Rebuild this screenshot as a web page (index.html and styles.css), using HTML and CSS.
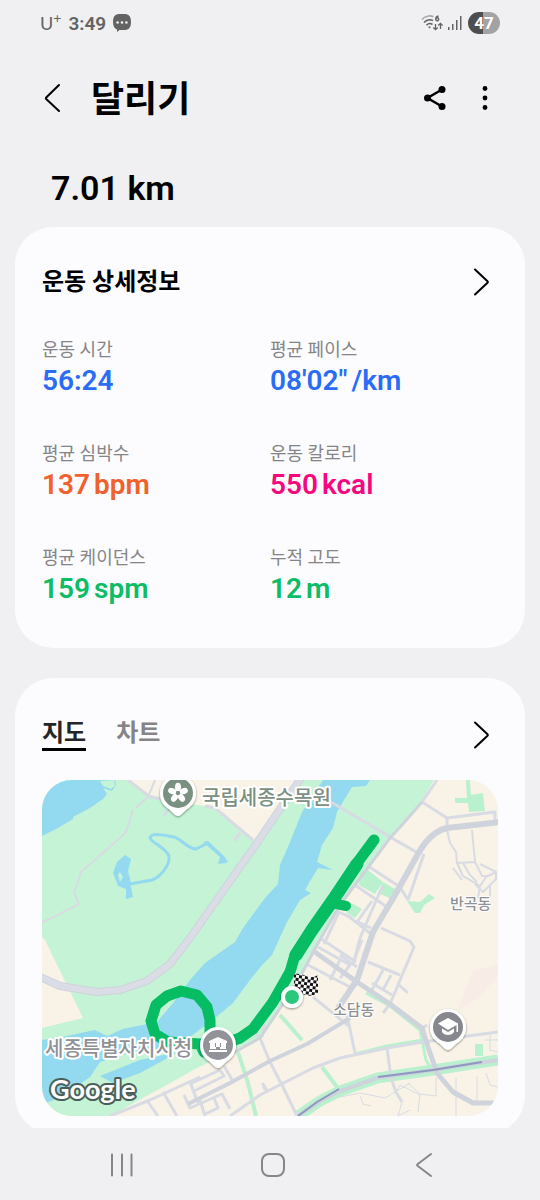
FILE: index.html
```html
<!DOCTYPE html>
<html lang="ko">
<head>
  <meta charset="UTF-8" />
  <meta name="viewport" content="width=device-width, initial-scale=1">
  <title>달리기</title>
  <link rel="stylesheet" href="styles.css">
</head>
<body>
  <!-- Status bar -->
  <div class="status-bar">
    <div class="status-left">
      <span class="carrier">U<sup>+</sup></span>
      <span class="clock">3:49</span>
      <svg class="chat-icon" width="18" height="18" viewBox="0 0 18 18">
        <path d="M7 0h4c5 0 7 2.500 7 8s-2 8-7 8H6.500L4 18v-2.500C1.500 14.500 0 12 0 8c0-5.500 2-8 7-8z" fill="#636363"/>
        <circle cx="4.600" cy="8.500" r="1.300" fill="#f0f0f2"/>
        <circle cx="9" cy="8.500" r="1.300" fill="#f0f0f2"/>
        <circle cx="13.400" cy="8.500" r="1.300" fill="#f0f0f2"/>
      </svg>
    </div>
    <div class="status-right">
      <svg width="22" height="18" viewBox="0 0 22 18" fill="none" stroke="#636363" stroke-width="1.600">
        <path d="M1 5.500C4 2 9 1 12.500 2.800" stroke="#aaa"/>
        <path d="M3 8.500c2.500-2.800 6-3.300 9-2M5.500 11.200c1.700-1.800 4.200-2 6-.7"/>
        <circle cx="8.500" cy="13.300" r="1" fill="#636363" stroke="none"/>
        <path d="M17.500 2c-2 .3-2.800 1.800-2.800 3.200M14.700 5.300a1.500 1.500 0 1 0 3 0a1.500 1.500 0 1 0-3 0" stroke-width="1.400"/>
        <path d="M14.500 10v5.500M12.300 13.500l2.200 2.200l2.200-2.200M19.500 15v-5.500M17.300 11.500l2.200-2.200l2.200 2.200" stroke-width="1.300"/>
      </svg>
      <svg width="15" height="16" viewBox="0 0 15 16" fill="#636363">
        <rect x="1" y="12" width="1.500" height="3"/>
        <rect x="5" y="9" width="1.500" height="6"/>
        <rect x="9" y="5" width="1.500" height="10"/>
        <rect x="13" y="1" width="1.500" height="14"/>
      </svg>
      <span class="battery">47</span>
    </div>
  </div>

  <main class="content">
    <!-- Toolbar -->
    <header class="toolbar">
      <button class="icon-btn" aria-label="뒤로">
        <svg width="24" height="30" viewBox="0 0 24 30" fill="none" stroke="#000" stroke-width="2" stroke-linecap="round" stroke-linejoin="round">
          <path d="M18 2L5.200 14.500q-.8.800 0 1.600L18 28"/>
        </svg>
      </button>
      <h1>달리기</h1>
      <button class="icon-btn" aria-label="공유">
        <svg width="24" height="26" viewBox="0 0 24 26">
          <path d="M19 4.500L4.500 13L19 21.500" fill="none" stroke="#000" stroke-width="2.500"/>
          <circle cx="19" cy="4.500" r="3.500"/>
          <circle cx="4.500" cy="13" r="3.500"/>
          <circle cx="19" cy="21.500" r="3.500"/>
        </svg>
      </button>
      <button class="icon-btn" aria-label="더보기">
        <svg width="24" height="26" viewBox="0 0 24 26">
          <circle cx="12" cy="3.500" r="2.400"/>
          <circle cx="12" cy="13" r="2.400"/>
          <circle cx="12" cy="22.500" r="2.400"/>
        </svg>
      </button>
    </header>

    <p class="distance">7.01 km</p>

    <!-- Workout details -->
    <section class="card details">
      <div class="card-head">
        <h2>운동 상세정보</h2>
        <button class="icon-btn" aria-label="상세정보 보기">
          <svg width="24" height="30" viewBox="0 0 24 30" fill="none" stroke="#000" stroke-width="2" stroke-linecap="round" stroke-linejoin="round">
            <path d="M9 2.500L21.500 14.200q.8.800 0 1.600L9 27.500"/>
          </svg>
        </button>
      </div>
      <dl class="stats">
        <div class="stat">
          <dt>운동 시간</dt>
          <dd class="blue">56:24</dd>
        </div>
        <div class="stat">
          <dt>평균 페이스</dt>
          <dd class="blue">08'02"<span class="unit">/km</span></dd>
        </div>
        <div class="stat">
          <dt>평균 심박수</dt>
          <dd class="orange">137<span class="unit">bpm</span></dd>
        </div>
        <div class="stat">
          <dt>운동 칼로리</dt>
          <dd class="pink">550<span class="unit">kcal</span></dd>
        </div>
        <div class="stat">
          <dt>평균 케이던스</dt>
          <dd class="green">159<span class="unit">spm</span></dd>
        </div>
        <div class="stat">
          <dt>누적 고도</dt>
          <dd class="green">12<span class="unit">m</span></dd>
        </div>
      </dl>
    </section>

    <!-- Map / chart -->
    <section class="card route">
      <div class="card-head">
        <div class="tabs" role="tablist">
          <button class="tab active" role="tab" aria-selected="true">지도</button>
          <button class="tab" role="tab" aria-selected="false">차트</button>
        </div>
        <button class="icon-btn" aria-label="지도 보기">
          <svg width="24" height="30" viewBox="0 0 24 30" fill="none" stroke="#000" stroke-width="2" stroke-linecap="round" stroke-linejoin="round">
            <path d="M9 2.500L21.500 14.200q.8.800 0 1.600L9 27.500"/>
          </svg>
        </button>
      </div>

      <svg class="map" viewBox="42 780 456 336" role="img" aria-label="달리기 경로 지도">
        <defs>
          <g id="pin">
            <path d="M0 23C-3 23-5 19-10 15.500C-15 12-18 7-18 0a18 18 0 0 1 36 0C18 7 15 12 10 15.500C5 19 3 23 0 23z"/>
          </g>
          <pattern id="checks" width="6" height="6" patternUnits="userSpaceOnUse" patternTransform="rotate(8)">
            <rect width="6" height="6" fill="#fff"/>
            <rect width="3" height="3" fill="#111"/>
            <rect x="3" y="3" width="3" height="3" fill="#111"/>
          </pattern>
          <filter id="shadow" x="-30%" y="-30%" width="160%" height="170%">
            <feDropShadow dx="0" dy="1" stdDeviation="1.300" flood-opacity="0.450"/>
          </filter>
        </defs>

        <rect x="42" y="780" width="456" height="336" fill="#f8f3e6"/>

        <!-- parks -->
        <path d="M42 780H128L150 795L190 804L212 807L253 841L300 780H434L420 803L402 825L390 837L370 865L340 905L317 945L300 980L278 1012L260 1037L223 1056L197 1068L163 1087L110 1116H42V1028L83 1018L45 940L42 937z" fill="#c5f3d5"/>
        <g fill="#b9f0cd">
          <path d="M466 780h4l1 15l12-2l2 18l-16 1l-1-9h-13v-5h12z"/>
          <path d="M360 871l8-1l15 12l-8 12l-16-9zM383 882l17 10l-6 8l-16-7zM350 902l12 7l-7 9l-9-6z"/>
          <path d="M407 901l13 1l9-8l6 4l-11 7l-4 8h-5z"/>
          <path d="M475 1044h8v12h-8z"/>
        </g>

        <!-- water -->
        <g fill="#93d9ef">
          <path d="M42 780H115L116 785L112 791L103 788L107 794L103 799L90 808L73 817V819L58 828L42 836z"/>
          <path d="M323 780H370L366 786L352 787L344 800L337 812L333 828L322 845L317 862L333 870L318 868L309 883L305 890L311 893L300 900L287 922L272 955L262 965L250 980L233 1003L215 1018L190 1037L157 1049L130 1053L100 1062L90 1077L75 1088L60 1098L42 1104V1040L62 1037L95 1030L107 1036L123 1029L157 1022L173 1003L190 980L205 963L235 942L243 928L265 898L278 884L280 865L290 842L302 812z"/>
          <path d="M100 1076L140 1060L178 1052L155 1065L140 1073L113 1083z"/>
          <path d="M125 855l6 4l-3 12l3 12h-1l3 14l-7 2v-10l-8-3l-5-13l4-11z"/>
          <path d="M203 842l5-1l16 15l4 6l-2 1l-8 1l2-7z"/>
        </g>
        <path d="M130 884L152 880C160 877 170 866 169 856C166 848 152 843 150 838C151 833 160 834 174 837C180 838 188 849 196 849L206 844" fill="none" stroke="#93d9ef" stroke-width="3"/>
        <path d="M120 872l3 5l-3 5l-2-7z" fill="#c5f3d5"/>
        <path d="M100 781l14-1l1 6l-4 3l-8-3z" fill="#c5f3d5"/>

        <!-- green strips along canals and streets -->
        <g fill="none" stroke="#b9f0cd" stroke-width="4">
          <path d="M238 1052L248 1083L256 1116M280 1015L302 1040M322 1067L337 1087"/>
          <path d="M366 993L390 1006L420 1030L426 1060L432 1070M355 1054L387 1046L423 1040" stroke-width="3"/>
          <path d="M298 1116L320 1101L340 1091L377 1078L433 1070L498 1060" stroke-width="11"/>
        </g>

        <!-- side streets -->
        <g fill="none" stroke="#d8dbe3" stroke-width="3" stroke-linejoin="round">
          <path d="M155 780L148 797L136 808M133 810L126 832L112 845L81 872L74 893L79 904L54 917L42 922" stroke-width="2"/>
          <path d="M128 780L150 797L190 804M205 806L215 808L253 840M168 810L164 816M240 833L234 841"/>
          <path d="M329 801L360 819L390 837L418 853M422 802L447 818L495 812V822M447 818V828M437 780L422 802"/>
          <path d="M447 830L450 843L456 852L457 863L475 862L472 830M457 863L463 876L480 886L486 877L496 872V879L483 892L475 884M463 863L470 875L477 882M475 862L482 876L488 876M453 868L462 880M480 864L496 872M478 898L480 886M490 897V886" stroke-width="2"/>
          <path d="M368 866L400 887L408 900M424 854L408 900M355 885L387 907M347 915L371 934M383 886L378 896L360 938L354 962M358 922L371 928M372 901L357 922M381 928L410 941L414 947L390 1004L383 1013M368 962L400 975M383 970L372 990M391 975L383 990M372 983L392 995M398 984L408 993"/>
          <path d="M340 955L357 967M362 940L352 965M318 947L350 965L340 978M308 965L350 987M340 960L330 980M324 944L339 912L352 918M320 938L356 962"/>
          <path d="M347 1015L355 1053M387 1048L391 1078L396 1092L402 1102M340 1058L387 1048L423 1042L498 1032M423 1028L427 1025"/>
          <path d="M230 1116L260 1095L313 1068L340 1058M260 1038L270 1062L283 1087L297 1116M248 1026L260 1038M264 1024L262 1037M313 997L350 1027M265 1090L263 1084L268 1092"/>
          <path d="M163 1092L177 1116M110 1116L150 1100L200 1077M190 1084L220 1070L224 1076L194 1091M184 1095L190 1108L222 1094L230 1109M205 1116L200 1100M214 1098L218 1108L205 1114M190 1082L198 1103M148 1102L158 1116M224 1066L234 1083"/>
          <path d="M340 1097L360 1093L385 1098L410 1083M360 1096L363 1104L371 1106M396 1092L400 1085L420 1095L418 1112M408 1083L420 1094L436 1096V1078M456 1078V1116M477 1076V1100L470 1104M486 1073L490 1085L498 1087M402 1102L398 1116L410 1110M490 1033V1050L498 1052M485 1040H498" stroke-width="1"/>
        </g>

        <path d="M472 972L498 964V976L478 998L458 1010z" fill="#f8ece6"/>

        <!-- main roads -->
        <g fill="none" stroke="#cfd3dc" stroke-linejoin="round">
          <path d="M301 778L257 843L190 938L170 964L147 981L120 990L97 992L60 986L40 977" stroke-width="8"/>
          <path d="M301 778L257 843L190 938L170 964L147 981L120 990L97 992L60 986L40 977" stroke="#dadde6" stroke-width="6"/>
          <path d="M500 822L447 828Q430 832 418 854L395 895L373 932L357 980L338 1008" stroke-width="6"/>
          <path d="M422 802L402 825L390 838L340 905L317 945L297 983L260 1038L220 1060" stroke-width="3"/>
          <path d="M312 950L357 982L390 1004L422 1028L428 1047L437 1073L453 1092L473 1103H498" stroke-width="5"/>
          <path d="M188 1104L230 1083L270 1061L307 1044L350 1018" stroke-width="4"/>
          <path d="M298 1116L320 1101L340 1091L377 1078L433 1070L498 1060" stroke-width="4"/>
        </g>

        <!-- metro line -->
        <path d="M298 1116L317 1102L339 1089M378 1077L433 1070L482 1062" fill="none" stroke="#8b98bf" stroke-width="2"/>

        <!-- running route -->
        <path d="M374 840L357 863L333 900L312 930L295 955L290 972L273 1002L253 1029L240 1038L218 1046L204 1052L200 1044L168 1042L155 1034L151 1021L156 1005L167 996L181 991L197 995L207 1007L210 1020L210 1046" fill="none" stroke="#06bd64" stroke-width="11" stroke-linecap="round" stroke-linejoin="round"/>
        <path d="M357 864L333 900L312 930L296 955" fill="none" stroke="#06bd64" stroke-width="13" stroke-linecap="round" stroke-linejoin="round"/>
        <path d="M332 903L346 906" stroke="#06bd64" stroke-width="10" stroke-linecap="round"/>

        <!-- start and finish -->
        <path d="M294 974q6-1 12 2t12-1v18q-6 4-12 2t-12-2z" fill="url(#checks)"/>
        <circle cx="292" cy="997" r="9" fill="#2bc77d" stroke="#fff" stroke-width="4" filter="url(#shadow)"/>

        <!-- arboretum pin -->
        <g transform="translate(178 793)">
          <use href="#pin" fill="#fff" filter="url(#shadow)"/>
          <circle r="15" fill="#7a9080"/>
          <g fill="#fff">
            <ellipse cy="-6" rx="3" ry="4.300"/>
            <ellipse cy="-6" rx="3" ry="4.300" transform="rotate(72)"/>
            <ellipse cy="-6" rx="3" ry="4.300" transform="rotate(144)"/>
            <ellipse cy="-6" rx="3" ry="4.300" transform="rotate(216)"/>
            <ellipse cy="-6" rx="3" ry="4.300" transform="rotate(288)"/>
          </g>
          <circle r="2" fill="#7a9080"/>
        </g>

        <!-- labels -->
        <g class="map-label">
          <text class="place green-place" x="202" y="805">국립세종수목원</text>
          <text class="place" x="45" y="1056">세종특별자치시청</text>
          <text class="area" x="450" y="909">반곡동</text>
          <text class="area" x="333" y="1015">소담동</text>
        </g>

        <!-- city hall pin -->
        <g transform="translate(218 1045)">
          <use href="#pin" fill="#fff" filter="url(#shadow)"/>
          <circle r="15" fill="#929398"/>
          <path d="M0-8L9-4v2h-18v-2zM-8-2h5v4h-5zM-2-2h4v4h-4zM3-2h5v4H3zM-8 2h6v2h-6zM2 2h6v2H2zM-9 5H9v2H-9z" fill="#fff"/>
        </g>

        <!-- school pin -->
        <g transform="translate(448 1027)">
          <use href="#pin" fill="#fff" filter="url(#shadow)"/>
          <circle r="15" fill="#86888d"/>
          <path d="M0-9L10-3.500V5H8.500V-2L0 3L-10-3.500zM-6 1.500L0 5L6 1.500V5Q4 8 0 8T-6 5z" fill="#fff"/>
        </g>

        <text class="map-logo" x="50" y="1099">Google</text>
      </svg>
    </section>
  </main>

  <!-- System navigation -->
  <nav class="nav-bar">
    <button class="icon-btn" aria-label="최근 앱">
      <svg width="26" height="26" viewBox="0 0 26 26" fill="none" stroke="#868688" stroke-width="2" stroke-linecap="round">
        <path d="M3 2.500v21M13 2.500v21M22.500 2.500v21"/>
      </svg>
    </button>
    <button class="icon-btn" aria-label="홈">
      <svg width="26" height="26" viewBox="0 0 26 26" fill="none" stroke="#868688" stroke-width="2">
        <rect x="2" y="2" width="22" height="22" rx="7"/>
      </svg>
    </button>
    <button class="icon-btn" aria-label="뒤로 가기">
      <svg width="26" height="26" viewBox="0 0 26 26" fill="none" stroke="#868688" stroke-width="2" stroke-linecap="round" stroke-linejoin="round">
        <path d="M20 2L6.500 12.300q-.8.700 0 1.400L20 24"/>
      </svg>
    </button>
  </nav>
</body>
</html>
```
FILE: styles.css
```css
* {
  box-sizing: border-box;
}

body {
  margin: 0;
  height: 100vh;
  display: flex;
  flex-direction: column;
  background: #f0f0f2;
  color: #000;
  font-family: Roboto, "Noto Sans CJK KR", sans-serif;
}

h1, h2, p, dl, dd {
  margin: 0;
}

button {
  padding: 0;
  border: 0;
  background: none;
  color: inherit;
  font-family: inherit;
  cursor: pointer;
}

.icon-btn {
  display: flex;
  align-items: center;
  justify-content: center;
}

/* status bar */
.status-bar {
  flex: none;
  display: flex;
  align-items: center;
  justify-content: space-between;
  height: 46px;
  padding: 0 40px;
  color: #636363;
}

.status-left, .status-right {
  display: flex;
  align-items: center;
}

.status-left {
  gap: 7px;
}

.status-right {
  gap: 4px;
}

.carrier {
  font-family: Lato, sans-serif;
  font-size: 18px;
  font-weight: 400;
  line-height: 20px;
}

.carrier sup {
  font-size: 14px;
  line-height: 0;
}

.clock {
  font-size: 19px;
  font-weight: 600;
}

.battery {
  width: 32px;
  margin-left: 2px;
  border-radius: 11px;
  background: linear-gradient(90deg, #4e4e50 47%, #a3a3a5 47%);
  color: #fff;
  font-size: 17px;
  font-weight: 700;
  line-height: 22px;
  text-align: center;
}

/* scrolling page */
.content {
  flex: 1;
  min-height: 0;
  overflow-y: auto;
  scrollbar-width: none;
  padding: 0 15px;
}

.toolbar {
  display: flex;
  align-items: center;
  gap: 26px;
  height: 104px;
  padding: 0 28px 0 26px;
}

.toolbar h1 {
  flex: 1;
  padding-top: 4px;
  font-size: 36px;
  font-weight: 700;
  line-height: 48px;
}

.distance {
  padding: 16px 36px;
  font-size: 34px;
  font-weight: 600;
  line-height: 45px;
}

/* cards */
.card {
  padding: 40px 27px;
  border-radius: 38px;
  background: #fcfcfe;
}

.card + .card {
  margin-top: 30px;
}

.card-head {
  display: flex;
  align-items: center;
  justify-content: space-between;
  padding-right: 8px;
}

.card-head h2 {
  font-size: 24px;
  font-weight: 700;
  line-height: 30px;
}

.stats {
  display: grid;
  grid-template-columns: 1fr 1fr;
  row-gap: 42px;
  margin-top: 41px;
}

.stat dt {
  color: #858587;
  font-size: 18px;
  line-height: 24px;
}

.stat dd {
  font-size: 28px;
  font-weight: 600;
  line-height: 38px;
}

.unit {
  margin-left: 4px;
}

.blue {
  color: #2a6cf5;
}

.orange {
  color: #f0612c;
}

.pink {
  color: #f5087f;
}

.green {
  color: #0dbc66;
}

/* map card */
.route {
  padding-bottom: 18px;
}

.tabs {
  display: flex;
  gap: 30px;
}

.tab {
  border-bottom: 3px solid transparent;
  color: #858587;
  font-size: 24px;
  font-weight: 700;
  line-height: 30px;
}

.tab.active {
  border-color: #000;
  color: #252527;
}

.map {
  display: block;
  width: 100%;
  height: auto;
  margin-top: 29px;
  border-radius: 30px;
}

.map-label text {
  paint-order: stroke;
  stroke: #fff;
  stroke-width: 4px;
  stroke-linejoin: round;
  fill: #8f9196;
  font-weight: 500;
}

.map-label .place {
  font-size: 20px;
}

.map-label .green-place {
  fill: #7a9080;
}

.map-label .area {
  font-size: 15px;
  stroke-width: 2px;
}

.map-logo {
  paint-order: stroke;
  stroke: #4b5f5a;
  stroke-width: 4px;
  stroke-linejoin: round;
  fill: #fff;
  font-family: Lato, sans-serif;
  font-size: 27px;
  font-weight: 700;
}

/* bottom navigation */
.nav-bar {
  flex: none;
  display: grid;
  grid-template-columns: repeat(3, 1fr);
  height: 72px;
  padding: 2px 40px 0 46px;
}
```
